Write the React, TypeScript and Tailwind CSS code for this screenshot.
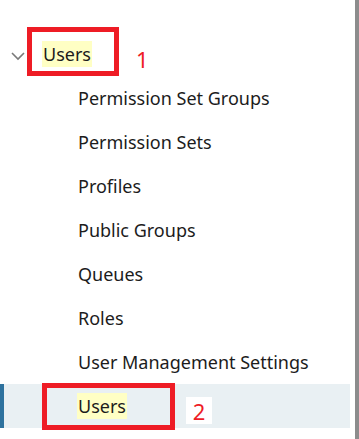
import React from "react";

const items = [
  "Permission Set Groups",
  "Permission Sets",
  "Profiles",
  "Public Groups",
  "Queues",
  "Roles",
  "User Management Settings",
];

export default function App() {
  return (
    <div
      className="flex h-[439px] w-[359px] overflow-hidden bg-white text-[#1c1c1c]"
      style={{ fontFamily: '"Noto Sans", "Open Sans", sans-serif' }}
    >
      <div className="relative w-[350px] pt-[32px]">
        <div className="flex h-[44px] items-center">
          <svg width="14" height="10" viewBox="0 0 14 10" className="ml-[11px] mr-[17px] mt-[3px]">
            <path d="M1 2 L7 8 L13 2" fill="none" stroke="#7a7a7a" strokeWidth="1.6" />
          </svg>
          <span className="bg-[#ffffc4] px-[1px] text-[18px] leading-[26px]">Users</span>
        </div>
        {items.map((t) => (
          <div key={t} className="flex h-[44px] items-center pl-[78px] text-[18px]">
            {t}
          </div>
        ))}
        <div className="relative flex h-[44px] items-center bg-[#e9f0f3] pl-[77px]">
          <div className="absolute left-0 top-0 h-full w-[4px] bg-[#2e729e]" />
          <span className="bg-[#ffffc4] px-[1px] text-[18px] leading-[26px]">Users</span>
        </div>

        <div className="absolute left-[27px] top-[27px] h-[49px] w-[92px] border-[5px] border-[#ee1c25]" />
        <div className="absolute left-[136px] top-[46px] text-[22px] leading-[26px] text-[#ee1c25]">1</div>

        <div className="absolute left-[42px] top-[383px] h-[47px] w-[133px] border-[5px] border-[#ee1c25]" />
        <div className="absolute left-[186px] top-[397px] flex h-[27px] w-[26px] items-center justify-center bg-white text-[22px] leading-[26px] text-[#ee1c25]">
          2
        </div>
      </div>
      <div className="w-[5px]" />
      <div className="h-full w-[4px] bg-[#8c8c8c]" />
    </div>
  );
}
